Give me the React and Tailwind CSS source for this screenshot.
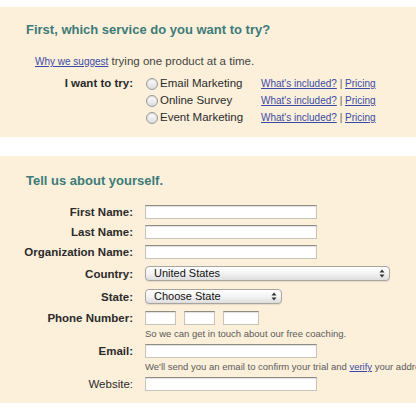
import React from "react";

const services = ["Email Marketing", "Online Survey", "Event Marketing"];

function Radio() {
  return (
    <span className="inline-block w-[12px] h-[12px] rounded-full border border-[#9a9a9a] bg-gradient-to-b from-[#ffffff] to-[#dcdcdc] shadow-[inset_0_1px_1px_rgba(0,0,0,0.15)]" />
  );
}

function TextInput({ w = "w-[172px]" }) {
  return (
    <div
      className={`${w} h-[14px] bg-white border border-[#c9c4bb] border-t-[#8f8a82] shadow-[inset_0_1px_1px_rgba(0,0,0,0.12)]`}
    />
  );
}

function Select({ w, value }) {
  return (
    <div
      className={`${w} h-[15px] rounded-[4px] border border-[#a9a59e] bg-gradient-to-b from-[#ffffff] via-[#f3f3f3] to-[#dedede] flex items-center justify-between pl-[8px] pr-[4px] shadow-[0_1px_1px_rgba(0,0,0,0.1)]`}
    >
      <span className="text-[11px] leading-none text-[#111]">{value}</span>
      <svg width="6" height="9" viewBox="0 0 6 9">
        <path d="M3 0.5 L5.5 3.5 L0.5 3.5 Z" fill="#333" />
        <path d="M3 8.5 L5.5 5.5 L0.5 5.5 Z" fill="#333" />
      </svg>
    </div>
  );
}

function Row({ label, bold = true, mt, children }) {
  return (
    <div className={`flex items-center ${mt}`}>
      <div
        className={`w-[133px] text-right text-[11.5px] leading-[14px] text-[#2b2b2b] ${bold ? "font-bold" : ""}`}
      >
        {label}
      </div>
      <div className="ml-[12px] flex items-center">{children}</div>
    </div>
  );
}

function Help({ mt, children }) {
  return (
    <div className={`${mt} pl-[145px] text-[9.5px] leading-[12px] text-[#5a5a5a] whitespace-nowrap`}>
      {children}
    </div>
  );
}

export default function App() {
  return (
    <div className="w-[416px] h-[416px] overflow-hidden bg-white pt-[7px] font-['Liberation_Sans',Arial,sans-serif]">
      <section className="h-[130px] bg-[#fcf0db] pt-[14px]">
        <h2 className="pl-[26px] text-[13px] leading-[18px] font-bold text-[#3d7b78]">
          First, which service do you want to try?
        </h2>
        <p className="mt-[14px] pl-[35px] h-[16px] leading-[16px] text-[11.5px] text-[#444]">
          <a href="#" className="text-[10px] text-[#3b4ba5] underline">
            Why we suggest
          </a>{" "}
          trying one product at a time.
        </p>
        <div className="mt-[6px] flex">
          <div className="w-[133px] text-right text-[11.5px] leading-[17px] font-bold text-[#2b2b2b]">
            I want to try:
          </div>
          <div className="ml-[13px] flex flex-col">
            {services.map((s) => (
              <div key={s} className="flex items-center h-[17px]">
                <Radio />
                <span className="ml-[2px] w-[101px] text-[11.5px] text-[#2b2b2b]">{s}</span>
                <span className="text-[10px] text-[#555]">
                  <a href="#" className="text-[#3b4ba5] underline">
                    What's included?
                  </a>{" "}
                  |{" "}
                  <a href="#" className="text-[#3b4ba5] underline">
                    Pricing
                  </a>
                </span>
              </div>
            ))}
          </div>
        </div>
      </section>

      <div className="h-[19px]" />

      <section className="h-[247px] bg-[#fcf0db] pt-[16px]">
        <h2 className="pl-[26px] text-[13px] leading-[18px] font-bold text-[#3d7b78]">
          Tell us about yourself.
        </h2>
        <Row label="First Name:" mt="mt-[15px]">
          <TextInput />
        </Row>
        <Row label="Last Name:" mt="mt-[6px]">
          <TextInput />
        </Row>
        <Row label="Organization Name:" mt="mt-[6px]">
          <TextInput />
        </Row>
        <Row label="Country:" mt="mt-[7px]">
          <Select w="w-[245px]" value="United States" />
        </Row>
        <Row label="State:" mt="mt-[8px]">
          <Select w="w-[137px]" value="Choose State" />
        </Row>
        <Row label="Phone Number:" mt="mt-[7px]">
          <div className="flex gap-[8px]">
            <TextInput w="w-[31px]" />
            <TextInput w="w-[31px]" />
            <TextInput w="w-[36px]" />
          </div>
        </Row>
        <Help mt="mt-[3px]">So we can get in touch about our free coaching.</Help>
        <Row label="Email:" mt="mt-[4px]">
          <TextInput />
        </Row>
        <Help mt="mt-[3px]">
          We'll send you an email to confirm your trial and{" "}
          <a href="#" className="text-[#3b4ba5] underline">
            verify
          </a>{" "}
          your address.
        </Help>
        <Row label="Website:" bold={false} mt="mt-[4px]">
          <TextInput />
        </Row>
      </section>
    </div>
  );
}
